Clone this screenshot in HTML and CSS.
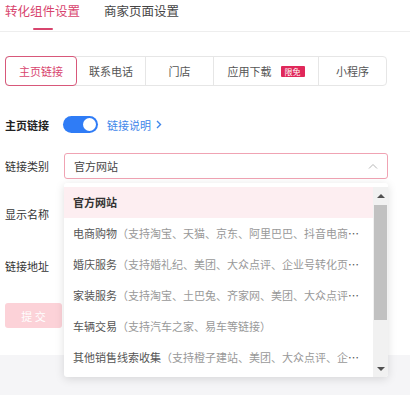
FILE: index.html
```html
<!DOCTYPE html>
<html lang="zh-CN">
<head>
    <meta charset="UTF-8">
    <meta name="viewport" content="width=device-width, initial-scale=1.0">
    <title>转化组件设置</title>
    <link rel="stylesheet" href="styles.css">
</head>
<body>
    <div class="page">
        <div class="tabs">
            <div class="tab active">转化组件设置</div>
            <div class="tab">商家页面设置</div>
        </div>

        <div class="segments">
            <div class="segment seg-home active">主页链接</div>
            <div class="segment seg-phone">联系电话</div>
            <div class="segment seg-store">门店</div>
            <div class="segment seg-app">应用下载<span class="badge">限免</span></div>
            <div class="segment seg-mini">小程序</div>
        </div>

        <div class="form">
            <div class="form-row row-switch">
                <div class="label strong">主页链接</div>
                <div class="switch"><span class="knob"></span></div>
                <a class="help-link">链接说明
                    <svg width="6" height="9" viewBox="0 0 6 9"><path d="M1 1l3.5 3.5L1 8" fill="none" stroke="#3f86ea" stroke-width="1.4"/></svg>
                </a>
            </div>
            <div class="form-row row-type">
                <div class="label">链接类别</div>
                <div class="select">
                    <span>官方网站</span>
                    <svg width="10" height="6" viewBox="0 0 10 6"><path d="M1 5.5L5 1.5l4 4" fill="none" stroke="#b5b5b5" stroke-width="1"/></svg>
                </div>
            </div>
            <div class="form-row row-name">
                <div class="label">显示名称</div>
                <div class="input"></div>
            </div>
            <div class="form-row row-url">
                <div class="label">链接地址</div>
                <div class="input"></div>
            </div>
            <button class="submit">提 交</button>
        </div>

        <div class="dropdown">
            <div class="options">
                <div class="option selected">官方网站</div>
                <div class="option">电商购物<span class="sub">（支持淘宝、天猫、京东、阿里巴巴、抖音电商等链接）</span></div>
                <div class="option">婚庆服务<span class="sub">（支持婚礼纪、美团、大众点评、企业号转化页等链接）</span></div>
                <div class="option">家装服务<span class="sub">（支持淘宝、土巴兔、齐家网、美团、大众点评等链接）</span></div>
                <div class="option">车辆交易<span class="sub">（支持汽车之家、易车等链接）</span></div>
                <div class="option">其他销售线索收集<span class="sub">（支持橙子建站、美团、大众点评、企业号等链接）</span></div>
                <div class="option">酒旅服务<span class="sub">（支持携程、去哪儿、飞猪、美团等链接）</span></div>
            </div>
            <div class="scrollbar">
                <div class="arrow up"></div>
                <div class="track"><div class="thumb"></div></div>
                <div class="arrow down"></div>
            </div>
        </div>
    </div>
    <div class="footer"></div>
</body>
</html>
```

FILE: styles.css
```css
html, body {
    min-height: 395px;
}
body {
    margin: 0;
    padding: 0;
    background-color: #f5f5f7;
    font-family: "Noto Sans CJK SC", "Noto Sans", sans-serif;
    font-size: 11px;
    color: #333;
}
.page {
    position: relative;
    height: 355px;
    background-color: #fff;
}
.footer {
    height: 40px;
    background-color: #f5f5f7;
}
.tabs {
    display: flex;
    gap: 24px;
    height: 31px;
    padding-left: 5px;
    border-bottom: 1px solid #eeeeee;
}
.tab {
    position: relative;
    font-size: 12.5px;
    line-height: 21px;
    color: #444;
}
.tab.active {
    color: #d8456e;
}
.tab.active::after {
    content: "";
    position: absolute;
    left: 50%;
    top: 28px;
    width: 20px;
    height: 2px;
    margin-left: -10px;
    border-radius: 1px;
    background-color: #d8456e;
}
.segments {
    display: flex;
    margin: 24px 0 0 5px;
    width: 382px;
    height: 30px;
    border: 1px solid #e6e6e6;
    border-radius: 4px;
    box-sizing: border-box;
}
.segment {
    display: flex;
    align-items: center;
    justify-content: center;
    gap: 9px;
    color: #555;
    border-right: 1px solid #e6e6e6;
    box-sizing: border-box;
}
.segment:last-child {
    border-right: none;
}
.segment.active {
    color: #d8456e;
    border: 1px solid #d8587a;
    border-radius: 4px;
    margin: -1px 0 -1px -1px;
}
.seg-home { width: 72px; }
.seg-phone { width: 69px; }
.seg-store { width: 68px; }
.seg-app { width: 105px; }
.seg-mini { flex: 1; }
.badge {
    display: inline-block;
    width: 24px;
    height: 11px;
    line-height: 11px;
    font-size: 8px;
    text-align: center;
    color: #fff;
    background-color: #e0285a;
    border-radius: 1px;
}
.form {
    display: flex;
    flex-direction: column;
    padding: 30px 0 0 5px;
}
.form-row {
    display: flex;
    align-items: center;
}
.label {
    width: 59px;
    flex-shrink: 0;
    color: #333;
}
.label.strong {
    font-weight: 700;
    color: #222;
}
.row-switch {
    height: 17px;
}
.row-type {
    height: 26px;
    margin-top: 20px;
}
.row-name {
    height: 26px;
    margin-top: 22px;
}
.row-url {
    height: 26px;
    margin-top: 26px;
}
.switch {
    position: relative;
    width: 35px;
    height: 17px;
    border-radius: 9px;
    background-color: #2f7cf6;
    margin-left: -1px;
}
.knob {
    position: absolute;
    right: 2px;
    top: 2px;
    width: 13px;
    height: 13px;
    border-radius: 50%;
    background-color: #fff;
}
.help-link {
    display: flex;
    align-items: center;
    gap: 5px;
    margin-left: 9px;
    color: #3f86ea;
}
.select {
    display: flex;
    align-items: center;
    justify-content: space-between;
    width: 324px;
    height: 26px;
    padding: 0 9px 0 9px;
    border: 1px solid #f0a3b3;
    border-radius: 3px;
    box-sizing: border-box;
    color: #444;
}
.input {
    width: 324px;
    height: 26px;
    border: 1px solid #e2e2e2;
    border-radius: 3px;
    box-sizing: border-box;
}
.submit {
    width: 57px;
    height: 25px;
    margin-top: 24px;
    padding: 0;
    border: none;
    border-radius: 3px;
    background-color: #fcd2d8;
    color: #fff;
    font-family: inherit;
    font-size: 11px;
}
.dropdown {
    position: absolute;
    z-index: 10;
    left: 64px;
    top: 183px;
    width: 324px;
    height: 194px;
    display: flex;
    background-color: #fff;
    border-radius: 3px;
    box-shadow: 0 2px 10px rgba(0, 0, 0, 0.13);
    overflow: hidden;
}
.options {
    flex: 1;
    min-width: 0;
    padding-top: 4px;
}
.option {
    height: 31px;
    line-height: 31px;
    padding: 0 9px;
    white-space: nowrap;
    overflow: hidden;
    text-overflow: ellipsis;
    color: #555;
}
.option.selected {
    background-color: #fdeef1;
    font-weight: 700;
    color: #333;
}
.sub {
    color: #999;
}
.scrollbar {
    display: flex;
    flex-direction: column;
    width: 15px;
    margin-top: 4px;
    background-color: #f1f1f1;
}
.arrow {
    height: 17px;
    flex-shrink: 0;
    display: flex;
    align-items: center;
    justify-content: center;
}
.arrow::before {
    content: "";
    border-left: 4px solid transparent;
    border-right: 4px solid transparent;
}
.arrow.up::before {
    border-bottom: 4px solid #505050;
}
.arrow.down::before {
    border-top: 4px solid #505050;
}
.track {
    flex: 1;
    padding: 1px 1px 0;
}
.thumb {
    height: 115px;
    background-color: #c1c1c1;
}
```
